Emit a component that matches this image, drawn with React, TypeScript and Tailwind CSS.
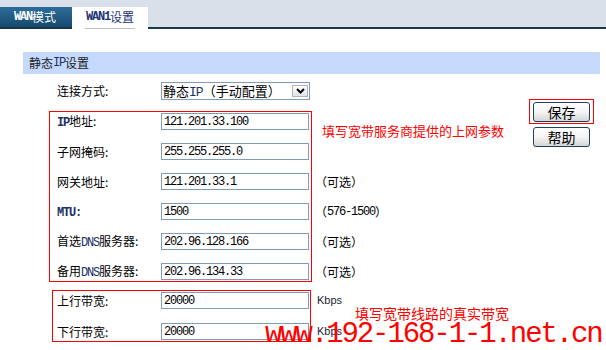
import React from 'react';

const mono = "font-['Liberation_Mono',monospace] tracking-[-1.2px]";

function Lat({ children, bold }: { children: React.ReactNode; bold?: boolean }) {
  return (
    <span className={`${mono} ${bold ? 'font-bold text-[#1c2f66]' : 'text-[#1c2f66]'}`}>{children}</span>
  );
}

function Field({ label, value }: { label: React.ReactNode; value: string }) {
  return (
    <div className="flex items-center h-[17px]">
      <div className="w-[104px] leading-none">{label}</div>
      <div className="w-[148px] h-[17px] border border-[#7f9db9] flex items-center pl-[2px]">
        <span className={`${mono} leading-none`}>{value}</span>
      </div>
    </div>
  );
}

function Btn({ children }: { children: React.ReactNode }) {
  return (
    <button className="w-[57px] h-[20px] rounded-[3px] border border-[#1f3f60] bg-gradient-to-b from-white via-[#f4f4f4] to-[#d6d6d6] text-[14px] leading-none flex items-center justify-center">
      {children}
    </button>
  );
}

function Side({ children }: { children?: React.ReactNode }) {
  return <div className="h-[17px] flex items-center leading-none">{children}</div>;
}

export default function App() {
  return (
    <div className="w-[606px] h-[350px] relative overflow-hidden bg-white text-black text-[12px] font-['Noto_Sans_CJK_SC',sans-serif]">
      {/* Tabs */}
      <div className="h-[29px] bg-[#d9e0ea] border-b-2 border-[#1b3747] flex items-end">
        <div className="w-[72px] h-[20px] bg-gradient-to-b from-[#2e6d99] to-[#154a6f] text-white flex items-center pl-[14px] leading-none">
          <span className="font-['Liberation_Mono',monospace] tracking-[-1.2px] font-bold">WAN</span>模式
        </div>
        <div className="w-[76px] h-[22px] -mb-[2px] bg-white flex flex-col items-center">
          <div className="h-[20px] flex items-center leading-none text-[#1c3478]">
            <span className="font-['Liberation_Mono',monospace] tracking-[-1.2px] font-bold">WAN1</span>设置
          </div>
          <div className="mt-[1px] w-[50px] h-px bg-[#b9c0c8]" />
        </div>
      </div>

      {/* Section header */}
      <div className="mt-[23px] ml-[23px] w-[577px] h-[22px] bg-[#c4d9fc] flex items-center pl-[6px] leading-none text-[#222]">
        静态<Lat>IP</Lat>设置
      </div>

      <div className="flex mt-[8px]">
        <div className="flex-1">
          {/* Connection type */}
          <div className="flex items-center h-[18px] pl-[57px]">
            <div className="w-[104px] leading-none">连接方式:</div>
            <div className="w-[149px] h-[18px] border border-[#7f9db9] flex items-center justify-between pl-[1px]">
              <span className="text-[13px] leading-none">
                静态<span className="font-['Liberation_Mono',monospace] tracking-[-1px] text-[#1c2f66]">IP</span>（手动配置）
              </span>
              <div className="w-[16px] h-[12px] mr-[1px] border border-[#a8b4c4] bg-gradient-to-b from-white to-[#dfe4ea] flex items-center justify-center">
                <svg width="9" height="6" viewBox="0 0 9 6">
                  <polyline points="1,1 4.5,4.5 8,1" fill="none" stroke="#000" strokeWidth="2" />
                </svg>
              </div>
            </div>
          </div>

          {/* WAN parameters */}
          <div className="flex mt-[11px]">
            <div className="ml-[49px] w-[263px] border border-[#ff0000] pl-[7px] py-[1px] flex flex-col gap-[13px]">
              <Field label={<><Lat bold>IP</Lat>地址:</>} value="121.201.33.100" />
              <Field label="子网掩码:" value="255.255.255.0" />
              <Field label="网关地址:" value="121.201.33.1" />
              <Field label={<Lat bold>MTU:</Lat>} value="1500" />
              <Field label={<>首选<Lat>DNS</Lat>服务器:</>} value="202.96.128.166" />
              <Field label={<>备用<Lat>DNS</Lat>服务器:</>} value="202.96.134.33" />
            </div>
            <div className="ml-[3px] pt-[2px] flex flex-col gap-[13px]">
              <Side />
              <Side />
              <Side>（可选）</Side>
              <Side>
                （<span className={mono}>576-1500</span>）
              </Side>
              <Side>（可选）</Side>
              <Side>（可选）</Side>
            </div>
          </div>

          {/* Bandwidth */}
          <div className="flex mt-[8px]">
            <div className="ml-[52px] w-[259px] border border-[#ff0000] pl-[4px] py-[1px] flex flex-col gap-[14px]">
              <Field label="上行带宽:" value="20000" />
              <Field label="下行带宽:" value="20000" />
            </div>
            <div className="ml-[6px] pt-[2px] flex flex-col gap-[14px] text-[11px] font-['Liberation_Sans',sans-serif] text-[#1c2430]">
              <Side>Kbps</Side>
              <Side>Kbps</Side>
            </div>
          </div>
        </div>

        {/* Buttons */}
        <div className="w-[65px] mr-[12px] mt-[17px] flex flex-col">
          <div className="border border-[#ff0000] pl-[3px] pt-[2px] pb-[1px]">
            <Btn>保存</Btn>
          </div>
          <div className="mt-[3px] pl-[4px]">
            <Btn>帮助</Btn>
          </div>
        </div>
      </div>

      {/* Annotations */}
      <div className="absolute left-[322px] top-[124px] text-[13px] leading-none text-[#ff0000]">
        填写宽带服务商提供的上网参数
      </div>
      <div className="absolute left-[355px] top-[306px] text-[14px] leading-none text-[#ff0000]">
        填写宽带线路的真实带宽
      </div>
      <div className="absolute left-[265px] top-[320px] text-[29px] leading-none text-[#ff0000] font-['Liberation_Mono',monospace] tracking-[-2.1px]">
        www.192-168-1-1.net.cn
      </div>
    </div>
  );
}
